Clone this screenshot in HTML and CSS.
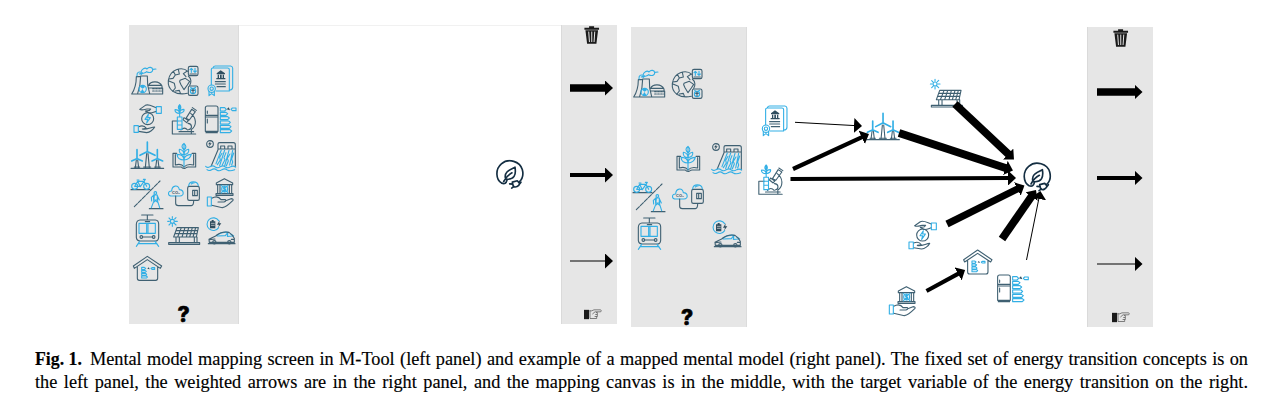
FILE: index.html
```
<!DOCTYPE html>
<html lang="en">
<head>
<meta charset="utf-8">
<title>Mental model mapping</title>
<link rel="stylesheet" href="styles.css">
</head>
<body>
<svg class="sprite" width="0" height="0" aria-hidden="true">
  <defs>
    <marker id="head" markerUnits="userSpaceOnUse" markerWidth="9" markerHeight="15" refX="1" refY="7.5" orient="auto"><path d="M0 0L8 7.5L0 15z"/></marker>
  </defs>
  <symbol id="nuclear" viewBox="12 126 108 108">
    <path class="d" d="M20 222H113V204H71M20 222C31 205 34 190 34 170H46M38 220C45 200 47 186 47 168H67C66 187 69 205 74 221M71 196C77 182 103 182 111 198V204M70 196H110"/>
    <path class="d dash" d="M83 206H112M83 213H112"/>
    <path class="b" d="M36 168C35 157 42 154 48 157C49 147 60 141 66 147C72 139 82 142 83 148L93 147M48 164C54 157 60 161 65 155C73 160 84 158 83 148M43 162L52 158"/>
    <circle class="b" cx="53" cy="207" r="11"/><path class="bf" d="M53 206L45 200Q53 195 61 200zM52 207L47 216H58z"/>
  </symbol>
  <symbol id="globe" viewBox="123 126 108 108">
    <path class="d" d="M189 154C169 138 135 149 130 181C127 209 150 227 187 220M190 168C200 176 199 189 194 196M145 154L151 165L144 175L132 177M151 165L163 162L160 148M132 183L148 190L151 204L143 214M165 181L181 175L194 184L187 195L177 209L168 194L164 185zM187 153L175 161L183 170M151 213L163 211L167 222"/>
    <rect class="d" x="190" y="139" width="29" height="28" rx="5"/><rect class="d" x="190" y="198" width="29" height="28" rx="5"/>
    <path class="b" d="M199 157V145M195 149L199 145L203 149M210 145V157M206 153L210 157L214 153"/><path class="d" d="M195 162H214"/>
    <circle class="b" cx="204" cy="213" r="8"/><path class="b" d="M197 202L204 207L212 202"/><path class="d" d="M204 207V219M200 211H208"/>
  </symbol>
  <symbol id="certificate" viewBox="234 126 108 108">
    <path class="b" d="M259 194V148Q259 144 264 144H308Q313 144 313 149V213H273M264 143Q266 138 271 138H317Q323 139 323 145V202Q322 210 314 210"/>
    <path class="df" d="M275 160L287 151L300 160V163H275zM278 164H282V174H278zM285 164H290V174H285zM293 164H297V174H293zM274 174H301V178H274z"/>
    <path class="d" d="M271 185H301M271 192H301M276 200H301"/>
    <circle class="b" cx="260" cy="206" r="11"/><circle class="b" cx="260" cy="206" r="5"/><path class="b" d="M252 214V227L260 221L268 227V214"/>
  </symbol>
  <symbol id="hands" viewBox="12 239 108 108">
    <path class="d" d="M94 262C80 257 70 250 61 255L44 267C52 272 60 266 66 266H77C74 274 66 271 61 272L72 278C83 279 88 274 94 273M41 319C53 314 60 318 64 324L52 326C62 330 78 321 89 320C85 328 74 336 65 337L41 333"/>
    <path class="b" d="M94 259H109V279H94zM27 316H40V336H27z"/>
    <circle class="d" cx="68" cy="295" r="18"/><path class="b" d="M70 282L60 297H68L65 308L76 292H68z"/>
  </symbol>
  <symbol id="microscope" viewBox="123 239 108 108">
    <path class="d" d="M158 302H142V341H159M154 341H212M162 334H206M168 329Q178 318 188 329M197 279C215 292 216 316 199 328L199 340M189 309C202 310 203 326 191 328M183 294L200 267L211 274L193 299zM177 292L190 301L185 307L174 298zM202 262L214 270"/>
    <path class="b" d="M157 290H171V327H157zM164 290V258M164 279C154 279 149 274 150 268C158 268 163 272 164 279C173 278 179 273 177 267C168 267 164 273 164 279M164 270C158 263 159 258 164 253C169 259 169 264 164 270M157 302H171M157 314H171"/>
  </symbol>
  <symbol id="fridge" viewBox="234 239 108 108">
    <path class="d" d="M247 257H273Q279 257 279 263V333H241V263Q241 257 247 257zM241 285H279M241 290H279M247 272V279M247 296V308M243 337H277"/>
    <path class="b" d="M286 262H299L304 267L299 272H286zM286 276H303L308 280L303 285H286zM286 289H308L313 293L308 298H286zM286 302H311L316 306L311 311H286zM286 315H313L318 319L313 324H286zM286 328H315L320 332L315 337H286zM322 263H333V271H322L318 267z"/>
    <path class="df" d="M305 267L311 261L315 270z"/>
  </symbol>
  <symbol id="wind" viewBox="12 22 108 108">
    <path class="d" d="M18 116H116M34 91L31 114M38 91L41 114M65 72L61 114M69 72L73 114M95 91L92 114M99 91L102 114M28 112H44M56 112H77M89 112H106"/>
    <path class="blade" d="M67 66V37M66 66L45 77M68 66L90 77M36 87V60M35 87L20 94M37 87L52 94M97 87V60M96 87L81 94M98 87L113 94"/>
  </symbol>
  <symbol id="book" viewBox="123 22 108 108">
    <path class="d" d="M155 71H144V112H169Q172 117 180 116Q186 112 190 112H212V71H201M151 75V106Q169 100 177 112Q187 101 206 106V75"/>
    <path class="b" d="M177 111V45M177 61C168 53 170 46 177 41C184 48 185 54 177 61M177 75C166 75 161 67 163 59C173 61 177 66 177 75C188 74 193 67 191 59C181 61 177 67 177 75M177 91C164 91 157 83 156 74C169 74 177 81 177 91C190 90 197 82 199 74C185 74 177 82 177 91"/>
  </symbol>
  <symbol id="dam" viewBox="234 22 108 108">
    <circle class="d" cx="255" cy="43" r="10"/><path class="df" d="M257 35L249 44H254L252 51L260 41H255z"/>
    <path class="d" d="M259 108L279 60V43Q279 39 284 39H325Q331 39 331 45V111M279 58H331M287 58V49H299V58M309 58V49H321V58"/>
    <path class="b" d="M289 61L273 102M299 61L284 108M312 62L299 109M323 62L314 106M291 71L284 83L286 91L277 105M303 69L297 84L300 90L292 105M315 73L307 86L310 94L304 108M326 70L320 88L323 97L320 106M242 110Q248 116 255 111Q263 106 271 112Q278 117 286 111Q294 106 301 112Q309 117 317 111Q325 107 332 112M246 120Q252 125 260 120Q268 115 275 121Q283 126 291 120Q299 115 307 121Q315 126 329 120"/>
  </symbol>
  <symbol id="active" viewBox="12 134 108 108">
    <path class="d" d="M18 178H75M73 235H114"/><path class="d longdash" d="M28 229L105 152"/>
    <circle class="b" cx="29" cy="168" r="9"/><circle class="b" cx="65" cy="168" r="9"/><path class="b" d="M29 168L38 153H57L65 168M38 153L46 169L57 153M29 168H46M36 149H42M55 147H61L57 153"/>
    <circle class="b" cx="91" cy="188" r="4"/><path class="b" d="M87 194L79 201L80 212M88 195L86 214L79 232M96 194L103 209M97 196L98 213L104 232M87 215L92 211L98 216M85 194H97V209H86z"/>
  </symbol>
  <symbol id="carbon" viewBox="123 134 108 108">
    <path class="b" d="M142 197C126 197 128 181 140 182C141 163 160 163 163 178C177 178 179 197 165 197z"/>
    <path class="d" d="M152 197V219Q152 226 160 226H199Q206 225 206 211M193 168H218Q223 168 223 173V205Q223 210 218 210H193Q188 210 188 205V173Q188 168 193 168zM203 180H217V196H203zM209 180V196"/>
    <path class="b" d="M191 166C193 151 217 151 220 166M199 161Q203 157 207 158"/>
  </symbol>
  <symbol id="bank" viewBox="234 134 108 108">
    <path class="d" d="M274 158L298 145L323 158V163H274zM278 164V188M285 164V188M313 164V188M320 164V188M273 190H324V195H273zM260 204C272 197 282 199 288 208H301Q305 213 297 215H279M302 211L318 205Q326 205 324 210C315 219 306 230 292 232L260 225"/>
    <circle class="b" cx="299" cy="176" r="9"/><path class="b" d="M302 171H296V176H302V181H295M299 168V184M289 165L292 168M309 165L306 168M289 188L292 184M309 188L306 184M247 200H259V227H247z"/>
  </symbol>
  <symbol id="train" viewBox="12 7 108 108">
    <path class="d" d="M50 16H84M67 17V31M45 31H91Q101 32 101 43V83Q100 94 91 94H45Q35 93 34 83V43Q35 32 45 31M61 36H74M53 82H82"/><circle class="d" cx="49" cy="82" r="4"/><circle class="d" cx="86" cy="82" r="4"/>
    <path class="b" d="M44 41H91V71H42V41zM65 41V71M69 41V71M44 95L34 110M90 95L101 110M39 102H96"/>
  </symbol>
  <symbol id="solar" viewBox="123 7 108 108">
    <circle class="b" cx="142" cy="35" r="6"/><path class="b" d="M142 21V26M142 44V50M128 35H133M151 35H157M132 25L136 29M148 41L153 46M132 46L136 42M149 28L153 24"/>
    <path class="d" d="M131 99H224V104H131zM153 82V98M163 82V98M208 82V98M216 82V98M156 54H220L214 82H146zM154 63H217M150 72H215M169 54L158 82M180 54L171 82M191 54L184 82M202 54L194 82M212 54L204 82"/>
  </symbol>
  <symbol id="car" viewBox="234 7 108 108">
    <path class="b" d="M281 54A19 19 0 1 1 281 33M274 77Q292 65 309 68L301 78L277 79M309 68L307 80L322 79M317 73L326 79"/>
    <path class="df" d="M255 35H260V31H266V35H271V56H255zM284 32L276 45H282L279 54L289 41H283z"/><path class="w" d="M259 41H268M259 47H268"/>
    <path class="d" d="M253 98L252 89Q260 84 272 79Q289 64 312 68Q324 76 328 86V98H253M250 102H330M253 90L270 88M319 89H328"/>
    <circle class="d" cx="268" cy="98" r="5"/><circle class="d" cx="313" cy="98" r="5"/>
  </symbol>
  <symbol id="house" viewBox="12 120 108 108">
    <path class="d" d="M25 168L67 139L110 168L106 175L67 149L28 175zM37 171V205Q37 211 43 211H92Q98 211 98 205V171"/>
    <path class="b" d="M50 172H58L62 175L58 179H50zM50 181H60L64 184L60 187H50zM50 190H62L65 193L62 196H50zM50 198H64L67 201L64 204H50zM81 173H89V178H81L78 175z"/><path class="df" d="M67 176L71 172L74 178z"/>
  </symbol>
  <symbol id="target" viewBox="47 417 87 93">
    <path class="t" d="M66 488C48 478 46 446 65 430C87 411 121 423 128 447C132 462 129 475 119 484M66 488Q79 493 82 479M78 476C72 457 85 450 106 440C110 463 104 479 78 476zM72 483Q82 465 97 457"/>
    <path class="t" d="M98 485L113 481L120 489C118 498 108 502 101 498zM99 491L90 490M103 498L96 503M118 493L124 485"/>
  </symbol>
  <symbol id="trash" viewBox="0 0 46 54">
    <path class="k" d="M15 5V1H30V5H45V11H1V5zM4 13H42L37 53H9z"/><path class="bars" d="M14 18L16 47M23 18V47M32 18L30 47"/>
  </symbol>
  <symbol id="pointer" viewBox="0 0 54 32">
    <path class="k" d="M0 2H15V30H0z"/><path class="h" d="M17 5H23L30 2H50Q54 5 50 8H35M33 8L26 14M37 10H40V16H35M40 17V22H33M38 23V28H18V5"/>
  </symbol>
</svg>

<main class="figure">
  <div class="screens">
    <section class="screen first">
      <div class="palette">
        <div class="icons">
          <svg><use href="#nuclear"/></svg><svg><use href="#globe"/></svg><svg><use href="#certificate"/></svg>
          <svg><use href="#hands"/></svg><svg><use href="#microscope"/></svg><svg><use href="#fridge"/></svg>
          <svg><use href="#wind"/></svg><svg><use href="#book"/></svg><svg><use href="#dam"/></svg>
          <svg><use href="#active"/></svg><svg><use href="#carbon"/><text class="co" x="6" y="19">CO₂</text></svg><svg><use href="#bank"/></svg>
          <svg><use href="#train"/></svg><svg><use href="#solar"/></svg><svg><use href="#car"/></svg>
          <svg><use href="#house"/></svg>
        </div>
        <div class="help">?</div>
      </div>
      <svg class="canvas" viewBox="239 25 322 299"><use href="#target" x="495.7" y="159" width="29" height="31"/></svg>
      <div class="tools">
        <svg class="trash"><use href="#trash"/></svg>
        <svg class="arrow heavy" viewBox="0 0 44 16"><path d="M0 8H36"/></svg>
        <svg class="arrow medium" viewBox="0 0 44 16"><path d="M0 8H36"/></svg>
        <svg class="arrow thin" viewBox="0 0 44 16"><path d="M0 8H36"/></svg>
        <svg class="pointer"><use href="#pointer"/></svg>
      </div>
    </section>
    <section class="screen second">
      <div class="palette">
        <div class="icons">
          <svg><use href="#nuclear"/></svg><svg><use href="#globe"/></svg><i></i>
          <i></i><i></i><i></i>
          <i></i><svg><use href="#book"/></svg><svg><use href="#dam"/></svg>
          <svg><use href="#active"/></svg><svg><use href="#carbon"/><text class="co" x="6" y="19">CO₂</text></svg><i></i>
          <svg><use href="#train"/></svg><i></i><svg><use href="#car"/></svg>
        </div>
        <div class="help">?</div>
      </div>
      <svg class="canvas" viewBox="747 27 340 300">
        <use href="#certificate" x="757.3" y="102" width="36" height="36"/>
        <use href="#microscope" x="752.5" y="160.3" width="36" height="36"/>
        <use href="#wind" x="864.7" y="108.3" width="36" height="36"/>
        <use href="#solar" x="928.7" y="74.7" width="36" height="36"/>
        <use href="#hands" x="904" y="216.4" width="36" height="36"/>
        <use href="#house" x="959.3" y="243.7" width="36" height="36"/>
        <use href="#fridge" x="995.3" y="269" width="36" height="36"/>
        <use href="#bank" x="885" y="283" width="36" height="36"/>
        <use href="#target" x="1022.7" y="162" width="29" height="31"/>
        <g class="links">
          <path class="w1" d="M795 122.3L855 125.6"/>
          <path class="w4" d="M793 169L862.6 136.9"/>
          <path class="w4" d="M790.5 179L1009 178"/>
          <path class="w8" d="M899 133L1006.3 168.3"/>
          <path class="w8" d="M955 104L1008.9 154.7"/>
          <path class="w7" d="M947 224L1018.2 188.6"/>
          <path class="w8" d="M1002 239L1032 195.8"/>
          <path class="w1" d="M1026.5 260L1039 197.9"/>
          <path class="w4" d="M926.5 291L958.9 273.4"/>
        </g>
      </svg>
      <div class="tools">
        <svg class="trash"><use href="#trash"/></svg>
        <svg class="arrow heavy" viewBox="0 0 44 16"><path d="M0 8H38.5"/></svg>
        <svg class="arrow medium" viewBox="0 0 44 16"><path d="M0 8H38.5"/></svg>
        <svg class="arrow thin" viewBox="0 0 44 16"><path d="M0 8H38.5"/></svg>
        <svg class="pointer"><use href="#pointer"/></svg>
      </div>
    </section>
  </div>
  <div class="caption">
    <p><b>Fig. 1.</b><span>Mental model mapping screen in M-Tool (left panel) and example of a mapped mental model (right panel). The fixed set of energy transition concepts is on</span></p>
    <p><span>the left panel, the weighted arrows are in the right panel, and the mapping canvas is in the middle, with the target variable of the energy transition on the right.</span></p>
  </div>
</main>
</body>
</html>
```
FILE: styles.css
```
* { box-sizing: border-box; }
body { margin: 0; background: #fff; color: #000; }
svg { display: block; }
.sprite { position: absolute; }
.figure { width: 1287px; height: 416px; padding-top: 25px; overflow: hidden; }
.screens { display: flex; align-items: flex-start; gap: 14px; margin-left: 129px; height: 322px; }
.screen { display: grid; }
.first { grid-template: 299px / 110px 322px 56px; }
.second { grid-template: 300px / 116px 340px 66px; margin-top: 2px; }
.palette, .tools { background: #e6e6e6; display: flex; flex-direction: column; }
.palette { border-right: 1px solid #dcdcdc; }
.tools { border-left: 1px solid #dadada; }
.first .canvas { border-top: 1px solid #f1f1f1; }
.canvas { width: 100%; height: 100%; }
.icons { display: grid; grid-template-columns: repeat(3, 37px); grid-auto-rows: 37.6px; height: 226px; margin-top: 37px; }
.second .icons { grid-template-columns: repeat(3, 39px); margin-top: 38px; }
.icons svg { width: 36px; height: 36px; }
.help { font: 800 21px/18px Inter, "Open Sans", sans-serif; -webkit-text-stroke: .6px #000; text-align: center; margin-top: 18px; }
.second .help { padding-right: 3px; }
.d, .b, .t, .w, .h, .bars { fill: none; stroke-width: 3.3; stroke-linejoin: round; stroke-linecap: round; }
.d { stroke: #3f6072; }
.b { stroke: #32afe5; }
.t { stroke: #142e42; stroke-width: 5; }
.w { stroke: #e6e6e6; stroke-width: 2; }
.h { stroke: #555; stroke-width: 2.2; }
.bars { stroke: #e6e6e6; stroke-width: 3; }
.k { fill: #1a1a1a; }
.df { fill: #2f4d5e; }
.bf { fill: #32afe5; }
.blade { fill: none; stroke: #32afe5; stroke-width: 5; stroke-linecap: round; }
.dash { stroke-dasharray: 5 4; }
.longdash { stroke-dasharray: 13 4; }
.co { font: bold 4px "Liberation Sans", sans-serif; fill: #2f4d5e; }
.trash { width: 15.5px; height: 18px; margin: 1px 0 0 22px; }
.arrow { width: 44px; height: 16px; margin-left: 8px; overflow: visible; }
.arrow path, .links path { fill: none; stroke: #000; marker-end: url(#head); }
.heavy { margin-top: 36px; }
.heavy path { stroke-width: 7.5; }
.medium { margin-top: 70.5px; }
.medium path { stroke-width: 4; }
.thin { margin-top: 70.5px; }
.thin path { stroke-width: 1.2; }
.pointer { width: 18px; height: 11px; margin: 40px 0 0 22px; }
.second .trash { margin: 2px 0 0 25px; }
.second .arrow { margin-left: 9px; }
.second .heavy { margin-top: 37px; }
.second .medium { margin-top: 69.5px; }
.second .thin { margin-top: 70px; }
.second .pointer { margin-left: 24px; }
.w1 { stroke-width: 1; }
.w4 { stroke-width: 4.2; }
.w7 { stroke-width: 7; }
.w8 { stroke-width: 7.8; }
.caption { margin-left: 35px; padding-top: 1px; width: 1213px; font: 18.3px/23px "Liberation Serif", serif; -webkit-text-stroke: .15px #000; }
.caption p { display: flex; gap: 8px; margin: 0; white-space: nowrap; }
.caption b { font-size: 17.8px; }
.caption span { flex: 1; text-align: justify; text-align-last: justify; white-space: normal; height: 23px; }
```
